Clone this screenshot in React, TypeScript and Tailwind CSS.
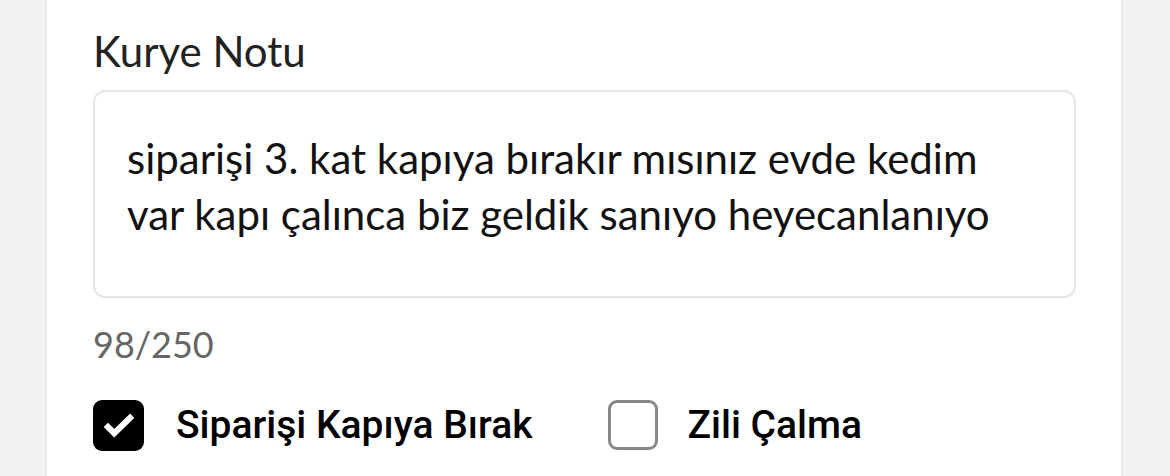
export default function App() {
  return (
    <div className="w-[1170px] h-[476px] bg-[#f2f2f2] flex overflow-hidden">
      <div className="ml-[45px] w-[1078px] h-full bg-white border-l-2 border-r-2 border-[#e9e9e9] pl-[46px] pr-[45px] pt-[26px]">
        <label className="block font-['Lato'] text-[42px] leading-[50px] text-[#222]">Kurye Notu</label>
        <div className="mt-[14px] h-[208px] rounded-[12px] border-2 border-[#e6e6e6] px-[32px] pt-[38px]">
          <p className="font-['Lato'] text-[42px] leading-[56px] text-[#111]">
            siparişi 3. kat kapıya bırakır mısınız evde kedim var kapı çalınca biz geldik sanıyo heyecanlanıyo
          </p>
        </div>
        <div className="mt-[24px] font-['Lato'] text-[36px] leading-[44px] text-[#666]">98/250</div>
        <div className="mt-[30px] flex items-center font-['Roboto'] font-medium text-[39px] text-black">
          <div className="flex items-center gap-[32px]">
            <span className="w-[51px] h-[51px] rounded-[9px] bg-black flex items-center justify-center">
              <svg width="38" height="38" viewBox="0 0 24 24" fill="none" stroke="white" strokeWidth="3.8" strokeLinecap="square" strokeLinejoin="miter">
                <path d="M5 13.2l4 4L19 7.5" />
              </svg>
            </span>
            <span>Siparişi Kapıya Bırak</span>
          </div>
          <div className="ml-[75px] flex items-center gap-[30px]">
            <span className="w-[50px] h-[50px] rounded-[9px] border-[3px] border-[#888]" />
            <span>Zili Çalma</span>
          </div>
        </div>
      </div>
    </div>
  );
}
